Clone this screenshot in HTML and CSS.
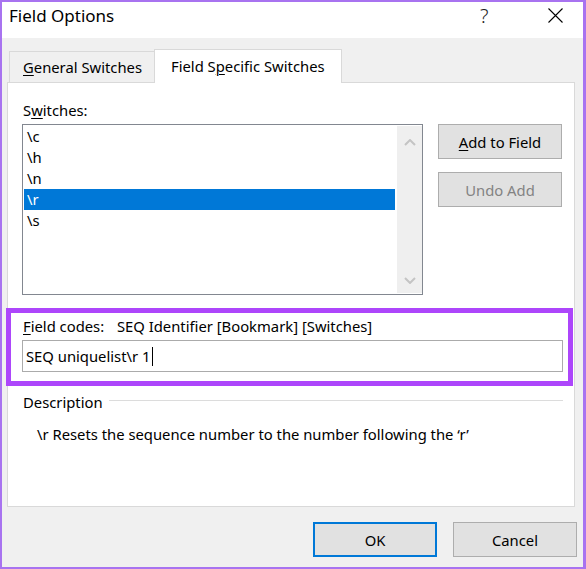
FILE: index.html
```html
<!DOCTYPE html>
<html lang="en">
<head>
<meta charset="utf-8">
<title>Field Options</title>
<link rel="stylesheet" href="styles.css">
</head>
<body>
<div class="window">
  <div class="titlebar">
    <span class="title">Field Options</span>
    <span class="help">?</span>
    <span class="close">
      <svg width="15" height="15" viewBox="0 0 15 15"><path d="M0.5 0.5 L14.5 14.5 M14.5 0.5 L0.5 14.5" stroke="#000" stroke-width="1.1" fill="none"/></svg>
    </span>
  </div>
  <div class="client">
    <div class="tabs">
      <div class="tab"><u>G</u>eneral Switches</div>
      <div class="tab active">Field S<u>p</u>ecific Switches</div>
    </div>
    <div class="panel">
      <div class="label">S<u>w</u>itches:</div>
      <div class="switch-row">
        <div class="listbox">
          <ul class="items">
            <li class="item">\c</li>
            <li class="item">\h</li>
            <li class="item">\n</li>
            <li class="item selected">\r</li>
            <li class="item">\s</li>
          </ul>
          <div class="scrollbar">
            <svg class="chev" width="12" height="7" viewBox="0 0 12 7"><path d="M1 6 L6 1 L11 6" stroke="#c4c4c4" stroke-width="2" fill="none"/></svg>
            <svg class="chev" width="12" height="7" viewBox="0 0 12 7"><path d="M1 1 L6 6 L11 1" stroke="#c4c4c4" stroke-width="2" fill="none"/></svg>
          </div>
        </div>
        <div class="side-buttons">
          <button class="btn"><u>A</u>dd to Field</button>
          <button class="btn disabled">Undo Add</button>
        </div>
      </div>
      <div class="codes">
        <div class="codes-label"><span class="codes-name"><u>F</u>ield codes:</span><span>SEQ Identifier [Bookmark] [Switches]</span></div>
        <div class="input">SEQ uniquelist\r 1<span class="caret"></span></div>
        <div class="highlight"></div>
      </div>
      <div class="desc-head"><span>Description</span><span class="rule"></span></div>
      <p class="desc">\r Resets the sequence number to the number following the ‘r’</p>
    </div>
    <div class="footer">
      <button class="btn ok">OK</button>
      <button class="btn">Cancel</button>
    </div>
  </div>
</div>
</body>
</html>
```
FILE: styles.css
```css
* { box-sizing: border-box; }
html, body { margin: 0; padding: 0; background: #ffffff; }
body { font-family: "Noto Sans", "Open Sans", sans-serif; font-size: 14.8px; color: #000; }
u { text-decoration-thickness: 1px; text-underline-offset: 2px; }

.window {
  width: 586px; height: 569px;
  border: 2px solid #a873f0; border-right-width: 3px;
  display: flex; flex-direction: column;
  background: #f0f0f0;
}

.titlebar {
  height: 36px; flex: none;
  background: #fff;
  display: flex; align-items: flex-start;
  padding-left: 7px;
}
.title { font-size: 17px; line-height: 27px; margin-top: 0; flex: 1; }
.help { font-size: 20px; line-height: 27px; margin-top: 0; color: #222; width: 8px; margin-right: 60px; font-weight: 300; }
.close { width: 15px; height: 15px; margin-top: 6px; margin-right: 20px; display: flex; }

.client { flex: 1; display: flex; flex-direction: column; padding: 11px 8px 0 5px; }

.tabs { display: flex; align-items: flex-end; padding-left: 2px; height: 33px; position: relative; z-index: 1; }
.tab {
  height: 31px; width: 145px;
  border: 1px solid #d9d9d9; border-bottom: none; border-right: none;
  background: #f0f0f0;
  padding: 5px 0 0 13px; line-height: 20px; white-space: nowrap;
}
.tab.active {
  height: 34px; width: 188px; margin-bottom: -1px;
  background: #fff; border-right: 1px solid #d9d9d9;
  padding: 6px 0 0 16px;
}

.panel {
  height: 425px; background: #fff; border: 1px solid #d9d9d9;
  padding: 17px 11px 0 14px;
}
.label { line-height: 20px; padding-left: 1px; }

.switch-row { display: flex; gap: 15px; margin-top: 4px; }
.listbox {
  width: 401px; height: 171px; border: 1px solid #828790;
  display: flex;
}
.items { list-style: none; margin: 0; padding: 1px 1px 0 1px; flex: 1; }
.item { height: 21px; line-height: 21px; padding-left: 3px; }
.item.selected { background: #0078d7; color: #fff; }
.scrollbar {
  width: 25px; margin: 1px 0 1px 1px; background: #efefef;
  display: flex; flex-direction: column; justify-content: space-between; align-items: center;
  padding: 13px 0 9px;
}
.chev { display: block; }

.side-buttons { display: flex; flex-direction: column; gap: 13px; }
.btn {
  width: 124px; height: 35px;
  background: #e1e1e1; border: 1px solid #adadad;
  font-family: inherit; font-size: 14.8px; color: #000; padding: 0;
}
.btn.disabled { color: #838383; }

.codes { position: relative; margin-top: 21px; }
.codes-label { display: flex; line-height: 20px; padding-left: 1px; }
.codes-name { width: 94px; }
.input {
  margin-top: 4px; height: 32px; border: 1px solid #ababab;
  padding-left: 3px; line-height: 30px; display: flex; align-items: center;
}
.caret { display: inline-block; width: 1px; height: 19px; background: #000; margin-left: 2px; }
.highlight {
  position: absolute; left: -16px; top: -8px; width: 567px; height: 78px;
  border: 5px solid #ad46fb; pointer-events: none;
}

.desc-head { display: flex; align-items: center; gap: 6px; margin-top: 20px; line-height: 20px; padding-left: 1px; }
.rule { flex: 1; height: 1px; background: #dcdcdc; margin-bottom: 3px; }
.desc { margin: 12px 0 0; padding-left: 15px; line-height: 20px; }

.footer { display: flex; justify-content: flex-end; gap: 16px; padding-top: 15px; margin-right: -2px; }
.btn.ok { border: 2px solid #0078d7; }
```
